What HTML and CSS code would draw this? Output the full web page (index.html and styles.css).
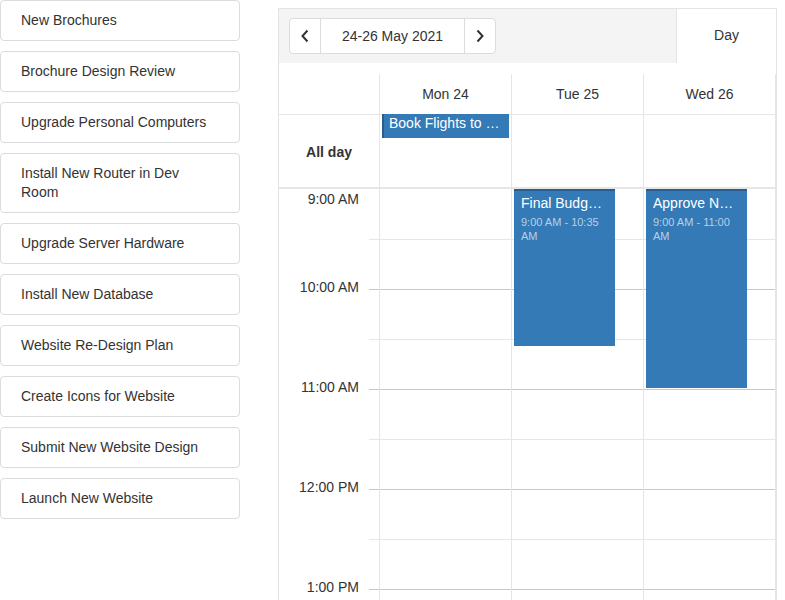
FILE: index.html
```html
<!DOCTYPE html>
<html>
<head>
<meta charset="utf-8">
<link rel="stylesheet" href="styles.css">
</head>
<body>
<div class="page">
  <ul class="tasks">
    <li class="task">New Brochures</li>
    <li class="task">Brochure Design Review</li>
    <li class="task">Upgrade Personal Computers</li>
    <li class="task">Install New Router in Dev Room</li>
    <li class="task">Upgrade Server Hardware</li>
    <li class="task">Install New Database</li>
    <li class="task">Website Re-Design Plan</li>
    <li class="task">Create Icons for Website</li>
    <li class="task">Submit New Website Design</li>
    <li class="task">Launch New Website</li>
  </ul>

  <div class="cal">
    <div class="toolbar">
      <div class="nav">
        <button class="nav-btn" aria-label="Previous">
          <svg width="10" height="14" viewBox="0 0 10 14"><path d="M7.5 1.5 L2.5 7 L7.5 12.5" fill="none" stroke="#333" stroke-width="2"/></svg>
        </button>
        <div class="nav-date">24-26 May 2021</div>
        <button class="nav-btn" aria-label="Next">
          <svg width="10" height="14" viewBox="0 0 10 14"><path d="M2.5 1.5 L7.5 7 L2.5 12.5" fill="none" stroke="#333" stroke-width="2"/></svg>
        </button>
      </div>
      <div class="view">Day</div>
    </div>

    <div class="grid">
      <div class="row head">
        <div class="tcell"></div>
        <div class="dcell">Mon 24</div>
        <div class="dcell">Tue 25</div>
        <div class="dcell">Wed 26</div>
      </div>
      <div class="row allday">
        <div class="tcell allday-label">All day</div>
        <div class="dcell"><div class="ad-event">Book Flights to San Fran for Sales Trip</div></div>
        <div class="dcell"></div>
        <div class="dcell"></div>
      </div>
      <div class="body">
        <div class="tcol">
          <div class="tslot"><div class="tlabel first">9:00 AM</div><div class="tick"></div></div>
          <div class="tslot"><div class="tlabel"></div><div class="tick"></div></div>
          <div class="tslot"><div class="tlabel">10:00 AM</div><div class="tick major"></div></div>
          <div class="tslot"><div class="tlabel"></div><div class="tick"></div></div>
          <div class="tslot"><div class="tlabel">11:00 AM</div><div class="tick major"></div></div>
          <div class="tslot"><div class="tlabel"></div><div class="tick"></div></div>
          <div class="tslot"><div class="tlabel">12:00 PM</div><div class="tick major"></div></div>
          <div class="tslot"><div class="tlabel"></div><div class="tick"></div></div>
          <div class="tslot"><div class="tlabel">1:00 PM</div><div class="tick major"></div></div>
        </div>
        <div class="dcol">
          <div class="dslot"></div><div class="dslot"></div><div class="dslot major"></div><div class="dslot"></div><div class="dslot major"></div>
          <div class="dslot"></div><div class="dslot major"></div><div class="dslot"></div><div class="dslot major"></div>
        </div>
        <div class="dcol">
          <div class="dslot"></div><div class="dslot"></div><div class="dslot major"></div><div class="dslot"></div><div class="dslot major"></div>
          <div class="dslot"></div><div class="dslot major"></div><div class="dslot"></div><div class="dslot major"></div>
          <div class="event ev-budget">
            <div class="ev-title">Final Budget Review</div>
            <div class="ev-time">9:00 AM - 10:35 AM</div>
          </div>
        </div>
        <div class="dcol">
          <div class="dslot"></div><div class="dslot"></div><div class="dslot major"></div><div class="dslot"></div><div class="dslot major"></div>
          <div class="dslot"></div><div class="dslot major"></div><div class="dslot"></div><div class="dslot major"></div>
          <div class="event ev-approve">
            <div class="ev-title">Approve New Online Marketing Strategy</div>
            <div class="ev-time">9:00 AM - 11:00 AM</div>
          </div>
        </div>
      </div>
    </div>
  </div>
</div>
</body>
</html>
```

FILE: styles.css
```css
html, body {
  margin: 0;
  padding: 0;
  height: 600px;
  overflow: hidden;
}
body {
  font-family: "Liberation Sans", Arial, sans-serif;
  font-size: 14px;
  color: #333;
  background: #fff;
}
.page {
  display: flex;
  align-items: flex-start;
  gap: 38px;
}

/* task list */
.tasks {
  list-style: none;
  margin: 0;
  padding: 0;
  width: 240px;
  display: flex;
  flex-direction: column;
  gap: 10px;
}
.task {
  box-sizing: border-box;
  width: 240px;
  border: 1px solid #dcdcdc;
  border-radius: 4px;
  padding: 10px 30px 10px 20px;
  line-height: 19px;
  background: #fff;
}

/* calendar */
.cal {
  box-sizing: border-box;
  width: 499px;
  margin-top: 8px;
  border: 1px solid #e3e3e3;
  border-bottom: none;
  height: 592px;
  overflow: hidden;
}
.toolbar {
  display: flex;
  height: 54px;
  background: #f4f4f4;
}
.nav {
  display: flex;
  margin: 9px 0 0 10px;
  height: 36px;
  box-sizing: border-box;
  border: 1px solid #dcdcdc;
  border-radius: 4px;
  background: #fff;
}
.nav-btn {
  width: 30px;
  padding: 0;
  margin: 0;
  border: none;
  background: transparent;
  display: flex;
  align-items: center;
  justify-content: center;
}
.nav-date {
  width: 143px;
  border-left: 1px solid #dcdcdc;
  border-right: 1px solid #dcdcdc;
  display: flex;
  align-items: center;
  justify-content: center;
}
.view {
  margin-left: auto;
  width: 100px;
  background: #fff;
  border-left: 1px solid #e3e3e3;
  display: flex;
  justify-content: center;
  padding-top: 18px;
  box-sizing: border-box;
  height: 54px;
}

.grid {
  margin-top: 11px;
  border-right: 1px solid #e6e6e6;
}
.row {
  display: flex;
}
.tcell {
  width: 100px;
  flex: none;
}
.dcell {
  box-sizing: border-box;
  width: 132px;
  flex: none;
  border-left: 1px solid #e6e6e6;
  position: relative;
}
.head {
  height: 41px;
  box-sizing: border-box;
  border-bottom: 1px solid #e6e6e6;
}
.head .dcell {
  display: flex;
  align-items: center;
  justify-content: center;
}
.allday {
  height: 74px;
  box-sizing: border-box;
  border-bottom: 2px solid #e6e6e6;
}
.allday-label {
  font-weight: bold;
  display: flex;
  align-items: center;
  justify-content: center;
  padding-top: 2px;
}
.ad-event {
  position: absolute;
  top: -1px;
  left: 2px;
  width: 127px;
  height: 24px;
  box-sizing: border-box;
  background: #337ab7;
  border-left: 2px solid #285e8e;
  color: #fff;
  padding: 0 5px 0 5px;
  line-height: 18px;
  white-space: nowrap;
  overflow: hidden;
  text-overflow: ellipsis;
}

.body {
  display: flex;
}
.tcol {
  width: 100px;
  flex: none;
}
.tslot {
  display: flex;
  align-items: flex-start;
  height: 50px;
}
.tlabel {
  box-sizing: border-box;
  width: 90px;
  padding-right: 10px;
  text-align: right;
  line-height: 16px;
  margin-top: -10px;
  white-space: nowrap;
}
.tlabel.first {
  margin-top: 2px;
}
.tick {
  width: 10px;
  height: 50px;
  box-sizing: border-box;
}
.tslot + .tslot .tick {
  border-top: 1px solid #e6e6e6;
}
.tslot + .tslot .tick.major {
  border-top-color: #c8c8c8;
}
.dcol {
  box-sizing: border-box;
  width: 132px;
  flex: none;
  border-left: 1px solid #e6e6e6;
  position: relative;
}
.dslot {
  height: 50px;
  box-sizing: border-box;
}
.dslot + .dslot {
  border-top: 1px solid #e6e6e6;
}
.dslot + .dslot.major {
  border-top-color: #c8c8c8;
}

.event {
  position: absolute;
  top: 0;
  left: 2px;
  width: 101px;
  box-sizing: border-box;
  background: #337ab7;
  border-top: 2px solid #295e8e;
  color: #fff;
  padding: 3px 10px 0 7px;
  overflow: hidden;
}
.ev-budget { height: 157px; }
.ev-approve { height: 199px; }
.ev-title {
  line-height: 18px;
  white-space: nowrap;
  overflow: hidden;
  text-overflow: ellipsis;
}
.ev-time {
  margin-top: 3px;
  font-size: 11px;
  line-height: 14px;
  color: rgba(255, 255, 255, 0.66);
}
```
